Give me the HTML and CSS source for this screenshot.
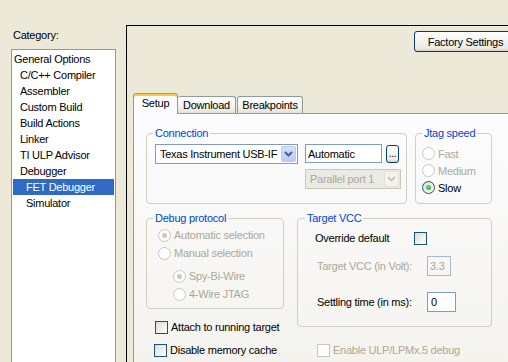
FILE: index.html
```html
<!DOCTYPE html>
<html lang="en">
<head>
    <meta charset="UTF-8">
    <title>Options for node</title>
    <link rel="stylesheet" href="styles.css">
</head>
<body>
    <div class="dialog">
        <aside class="sidebar">
            <div class="caption">Category:</div>
            <ul class="category-list">
                <li class="level0">General Options</li>
                <li class="level1">C/C++ Compiler</li>
                <li class="level1">Assembler</li>
                <li class="level1">Custom Build</li>
                <li class="level1">Build Actions</li>
                <li class="level1">Linker</li>
                <li class="level1">TI ULP Advisor</li>
                <li class="level1">Debugger</li>
                <li class="level2 selected">FET Debugger</li>
                <li class="level2">Simulator</li>
            </ul>
        </aside>

        <main class="options">
            <div class="toolbar">
                <button class="btn factory">Factory Settings</button>
            </div>

            <div class="tabs">
                <div class="tab active tab-setup">Setup</div>
                <div class="tab tab-download">Download</div>
                <div class="tab tab-breakpoints">Breakpoints</div>
            </div>

            <div class="tab-page">
                <div class="row">
                    <fieldset class="group connection">
                        <legend>Connection</legend>
                        <div class="conn-body">
                            <div class="combo driver">
                                <span class="combo-text">Texas Instrument USB-IF</span>
                                <span class="combo-btn">
                                    <svg width="9" height="6" viewBox="0 0 9 6"><path d="M1 1l3.5 3.5L8 1" fill="none" stroke="#4d6185" stroke-width="2"/></svg>
                                </span>
                            </div>
                            <div class="conn-right">
                                <div class="path-row">
                                    <input class="edit path" type="text" value="Automatic">
                                    <button class="btn browse">...</button>
                                </div>
                                <div class="combo port disabled">
                                    <span class="combo-text">Parallel port 1</span>
                                    <span class="combo-btn">
                                        <svg width="9" height="6" viewBox="0 0 9 6"><path d="M1 1l3.5 3.5L8 1" fill="none" stroke="#c9c7ba" stroke-width="2"/></svg>
                                    </span>
                                </div>
                            </div>
                        </div>
                    </fieldset>

                    <fieldset class="group jtag">
                        <legend>Jtag speed</legend>
                        <div class="jtag-body">
                            <div class="radio disabled"><span class="dot"></span>Fast</div>
                            <div class="radio disabled"><span class="dot"></span>Medium</div>
                            <div class="radio checked"><span class="dot"></span>Slow</div>
                        </div>
                    </fieldset>
                </div>

                <div class="row row-lower">
                    <div class="col-left">
                        <fieldset class="group protocol">
                            <legend>Debug protocol</legend>
                            <div class="protocol-body">
                                <div class="radio disabled checked"><span class="dot"></span>Automatic selection</div>
                                <div class="radio disabled"><span class="dot"></span>Manual selection</div>
                                <div class="sub-options">
                                    <div class="radio disabled checked"><span class="dot"></span>Spy-Bi-Wire</div>
                                    <div class="radio disabled"><span class="dot"></span>4-Wire JTAG</div>
                                </div>
                            </div>
                        </fieldset>
                        <div class="check attach"><span class="box"></span>Attach to running target</div>
                        <div class="check cache"><span class="box"></span>Disable memory cache</div>
                    </div>

                    <div class="col-right">
                        <fieldset class="group vcc">
                            <legend>Target VCC</legend>
                            <div class="vcc-body">
                                <div class="vcc-row override">
                                    <span class="vcc-label">Override default</span>
                                    <span class="box"></span>
                                </div>
                                <div class="vcc-row volt disabled">
                                    <span class="vcc-label">Target VCC (in Volt):</span>
                                    <input class="edit small" type="text" value="3.3" disabled>
                                </div>
                                <div class="vcc-row settle">
                                    <span class="vcc-label">Settling time (in ms):</span>
                                    <input class="edit settle-input" type="text" value="0">
                                </div>
                            </div>
                        </fieldset>
                        <div class="check ulp disabled"><span class="box"></span>Enable ULP/LPMx.5 debug</div>
                    </div>
                </div>
            </div>
        </main>
    </div>
</body>
</html>
```

FILE: styles.css
```css
body {
    margin: 0;
    width: 508px;
    height: 362px;
    overflow: hidden;
    background: #ece9d8;
    color: #000;
    font-family: "Liberation Sans", Arial, sans-serif;
    font-size: 11px;
    letter-spacing: -0.25px;
}
.dialog {
    display: flex;
    padding-left: 11px;
}

/* category list */
.sidebar {
    width: 105px;
    flex-shrink: 0;
    padding-top: 28px;
}
.caption {
    height: 14px;
    line-height: 14px;
    padding-left: 2px;
    margin-bottom: 7px;
}
.category-list {
    list-style: none;
    margin: 0;
    padding: 1px 1px 0;
    height: 311px;
    background: #fff;
    border: 1px solid #7f9db9;
    border-bottom: none;
}
.category-list li {
    height: 16px;
    line-height: 16px;
    white-space: nowrap;
}
.level0 { padding-left: 1px; }
.level1 { padding-left: 7px; }
.level2 { padding-left: 13px; }
.category-list .selected {
    background: #316ac5;
    color: #fff;
}

/* right side */
.options {
    width: 398px;
    flex-shrink: 0;
    margin: 25px 0 0 10px;
    border-left: 1px solid #000;
    border-top: 1px solid #000;
}
.toolbar {
    display: flex;
    justify-content: flex-end;
    padding: 5px 8px 0 0;
}
.btn {
    font: inherit;
    letter-spacing: inherit;
    color: #000;
    border: 1px solid #003c74;
    border-radius: 3px;
    background: linear-gradient(#ffffff, #f3f2ee 50%, #ecebe6 85%, #d6d0c5);
    padding: 0;
}
.factory {
    width: 103px;
    height: 21px;
}

.tabs {
    display: flex;
    align-items: flex-start;
    height: 21px;
    margin: 41px 0 -1px 6px;
    position: relative;
    z-index: 1;
}
.tab {
    height: 17px;
    margin-top: 3px;
    line-height: 16px;
    text-align: center;
    box-sizing: border-box;
    border: 1px solid #919b9c;
    border-bottom: none;
    border-radius: 3px 3px 0 0;
    background: linear-gradient(#ffffff, #f4f3ee 60%, #e3e2da);
}
.tab.active {
    height: 21px;
    margin-top: 0;
    line-height: 19px;
    border-top: 1px solid #e68b2c;
    box-shadow: inset 0 2px 0 #ffc73c;
    background: #fcfcfe;
}
.tab-setup { width: 45px; }
.tab-download { width: 58px; border-left: none; }
.tab-breakpoints { width: 66px; margin-left: 1px; }

.tab-page {
    margin-left: 6px;
    height: 235px;
    padding: 13px 0 0 12px;
    border: 1px solid #919b9c;
    border-bottom: none;
    background: linear-gradient(#fcfcfe, #f4f3ee);
}

/* group boxes */
.row {
    display: flex;
    gap: 8px;
}
.row-lower {
    gap: 13px;
    margin-top: 8px;
}
.group {
    margin: 0;
    padding: 0;
    min-width: 0;
    box-sizing: border-box;
    border: 1px solid #d0d0bf;
    border-radius: 4px;
}
.group legend {
    margin-left: 6px;
    padding: 0 2px;
    line-height: 13px;
    color: #0046d5;
}
.connection { width: 261px; height: 77px; }
.jtag { width: 77px; height: 77px; }
.protocol { width: 138px; height: 97px; }
.vcc { width: 195px; height: 115px; }
.vcc legend { margin-left: 7px; }

.conn-body {
    display: flex;
    gap: 7px;
    padding: 4px 0 0 8px;
}
.combo {
    display: flex;
    align-items: center;
    box-sizing: border-box;
    height: 20px;
    border: 1px solid #7f9db9;
    background: #fff;
}
.combo-text {
    flex: 1;
    padding-left: 4px;
    white-space: nowrap;
    overflow: hidden;
}
.combo-btn {
    display: flex;
    align-items: center;
    justify-content: center;
    width: 15px;
    height: 16px;
    margin-right: 1px;
    box-sizing: border-box;
    border: 1px solid #b9cbf3;
    border-radius: 2px;
    background: linear-gradient(#d4e0fc, #b6cbf7);
}
.driver { width: 143px; }
.port {
    width: 96px;
    margin-top: 6px;
}
.combo.disabled {
    border-color: #c9c7ba;
    background: #ebebe4;
    color: #aca899;
}
.combo.disabled .combo-btn {
    border-color: #e3e1d6;
    background: #f4f3ee;
}
.path-row {
    display: flex;
    align-items: flex-start;
    gap: 4px;
}
.edit {
    font: inherit;
    letter-spacing: inherit;
    color: #000;
    box-sizing: border-box;
    border: 1px solid #7f9db9;
    background: #fff;
    margin: 0;
    outline: none;
}
.path {
    width: 77px;
    height: 19px;
    padding: 0 2px;
}
.browse {
    width: 13px;
    height: 18px;
    margin-top: 1px;
    line-height: 12px;
    font-size: 10px;
}

/* radios and checkboxes */
.radio {
    display: flex;
    align-items: center;
    height: 17px;
    white-space: nowrap;
}
.dot {
    width: 13px;
    height: 13px;
    margin-right: 3px;
    box-sizing: border-box;
    border: 1px solid #1c5180;
    border-radius: 50%;
    background: linear-gradient(135deg, #dcdcd7, #ffffff);
    display: flex;
    align-items: center;
    justify-content: center;
    flex-shrink: 0;
}
.radio.checked .dot::after {
    content: "";
    width: 5px;
    height: 5px;
    border-radius: 50%;
    background: radial-gradient(circle at 40% 40%, #6ee36a, #21a121);
}
.radio.disabled {
    color: #aca899;
}
.radio.disabled .dot {
    border-color: #cac8bb;
    background: #fff;
}
.radio.disabled.checked .dot::after {
    background: #cac8bb;
}
.jtag-body {
    padding: 5px 0 0 6px;
}
.protocol-body {
    padding: 1px 0 0 11px;
}
.protocol-body .radio {
    height: 18px;
}
.sub-options {
    margin-top: 5px;
    padding-left: 15px;
}

.box {
    width: 13px;
    height: 13px;
    box-sizing: border-box;
    border: 1px solid #1c5180;
    background: linear-gradient(135deg, #dcdcd7, #ffffff);
    flex-shrink: 0;
}
.check {
    display: flex;
    align-items: center;
    gap: 3px;
    height: 18px;
    white-space: nowrap;
}
.check.disabled {
    color: #aca899;
}
.check.disabled .box {
    border-color: #cac8bb;
    background: #fff;
}
.attach {
    margin-top: 9px;
    padding-left: 9px;
}
.cache {
    margin-top: 5px;
    padding-left: 8px;
}
.ulp {
    margin-top: 14px;
    padding-left: 20px;
}

.vcc-body {
    padding: 4px 0 0 17px;
}
.vcc-row {
    display: flex;
    align-items: center;
    white-space: nowrap;
}
.override {
    height: 18px;
}
.override .vcc-label {
    width: 99px;
}
.volt,
.settle {
    height: 20px;
}
.volt {
    margin-top: 9px;
}
.settle {
    margin-top: 16px;
}
.volt .vcc-label,
.settle .vcc-label {
    width: 110px;
    padding-left: 2px;
}
.vcc-row.disabled {
    color: #aca899;
}
.small {
    width: 24px;
    height: 20px;
    padding: 0 2px;
    border-color: #a5b9d0;
    background: transparent;
    color: #aca899;
}
.settle-input {
    width: 29px;
    height: 20px;
    padding: 0 3px;
}
```
